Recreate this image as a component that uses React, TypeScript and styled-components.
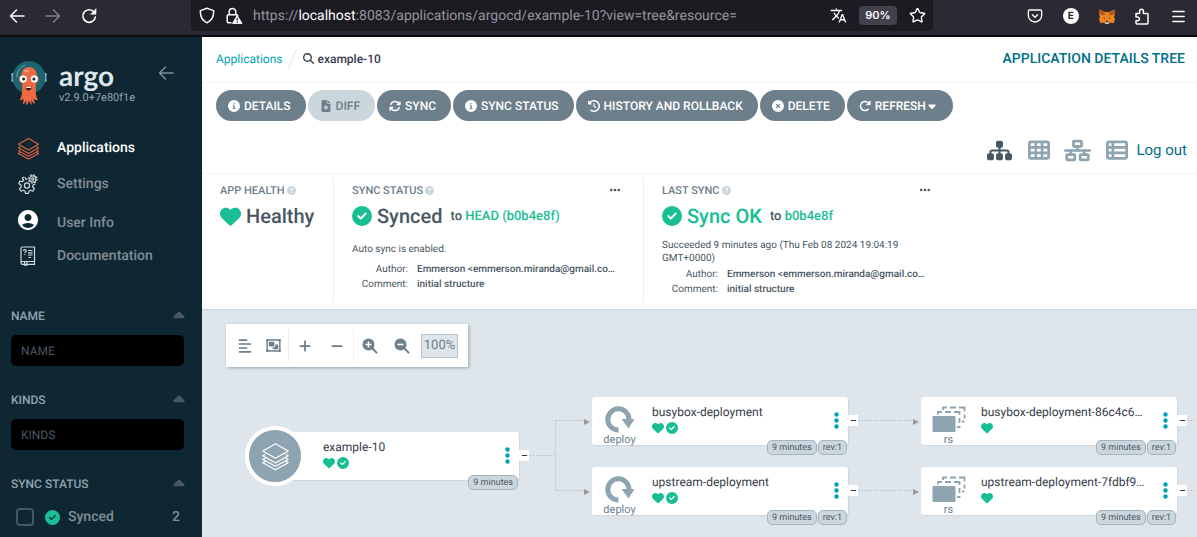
import React from "react";
import styled, { createGlobalStyle } from "styled-components";
import {
  FaArrowRotateRight,
  FaArrowsRotate,
  FaCaretDown,
  FaCaretUp,
  FaCircleCheck,
  FaCircleInfo,
  FaCircleQuestion,
  FaCircleXmark,
  FaClockRotateLeft,
  FaEllipsis,
  FaFileMedical,
  FaHeart,
  FaMagnifyingGlass,
  FaMinus,
  FaNetworkWired,
  FaPlus,
  FaRegObjectGroup,
  FaSitemap,
  FaTableCells,
  FaTableList,
} from "react-icons/fa6";
import { MdAccountCircle, MdTranslate } from "react-icons/md";
import { Menu, Pocket, Star } from "lucide-react";

const GlobalStyle = createGlobalStyle`
  *, *::before, *::after { box-sizing: border-box; }
  body {
    margin: 0;
    font-family: Roboto, "Liberation Sans", sans-serif;
    text-rendering: geometricPrecision;
    color: #495763;
    background: #dee6eb;
    overflow: hidden;
  }
  button, input { font-family: inherit; text-rendering: inherit; }
  button { border: 0; padding: 0; background: none; color: inherit; cursor: pointer; }
  a { text-decoration: none; color: inherit; }
  svg { display: block; flex: none; }
`;

const Page = styled.div`
  min-height: 100vh;
  display: flex;
  flex-direction: column;
`;

/* ---------- browser bar ---------- */

const BrowserBar = styled.header`
  display: flex;
  align-items: flex-start;
  height: 37px;
  background: #2b2a33;
  border-bottom: 2px solid #0c0c0d;
  color: #fbfbfe;
`;

const BrowserNav = styled.div`
  display: flex;
  align-items: center;
  gap: 20px;
  width: 191px;
  height: 32px;
  padding-left: 9px;
`;

const BrowserButton = styled.button<{ $dim?: boolean }>`
  display: flex;
  opacity: ${(p) => (p.$dim ? 0.4 : 1)};
`;

const UrlBar = styled.div`
  flex: 1;
  display: flex;
  align-items: center;
  height: 31px;
  padding: 0 7px 0 8px;
  border-radius: 0 0 4px 4px;
  background: #1c1b22;
`;

const LockButton = styled.button`
  margin-left: 10px;
`;

const UrlText = styled.div`
  flex: 1;
  margin-left: 10px;
  font-size: 14px;
  line-height: 20px;
  color: #94949c;
  white-space: nowrap;

  b { font-weight: 400; color: #fbfbfe; }
`;

const ZoomLevel = styled.button`
  width: 38px;
  height: 19px;
  margin: 0 12px;
  border-radius: 4px;
  background: #42414d;
  color: #fbfbfe;
  font: 600 11px/19px Inter, sans-serif;
`;

const BrowserTools = styled.div`
  display: flex;
  align-items: center;
  justify-content: space-between;
  width: 264px;
  height: 32px;
  padding: 0 10px 0 94px;
`;

const Avatar = styled.button`
  width: 16px;
  height: 16px;
  border-radius: 50%;
  background: #fbfbfe;
  color: #2b2a33;
  font: 700 10px/16px Inter, sans-serif;
`;

/* ---------- sidebar ---------- */

const Shell = styled.div`
  flex: 1;
  display: flex;
`;

const Sidebar = styled.aside`
  flex: none;
  width: 202px;
  padding: 23px 18px 0 11px;
  background: #0f2733;
  color: #818d94;
`;

const Brand = styled.div`
  display: flex;
  height: 69px;
`;

const BrandText = styled.div`
  flex: 1;
  margin-left: 12px;
`;

const Wordmark = styled.div`
  font: 700 28px/30px Lato, sans-serif;
  color: #dee6eb;
`;

const Version = styled.div`
  font-size: 11px;
  line-height: 16px;
  color: #8fa4b1;
`;

const CollapseButton = styled.button`
  align-self: flex-start;
  margin: 5px 10px 0 0;
  color: #818d94;
`;

const NavItem = styled.a<{ $active?: boolean; $low?: boolean }>`
  display: flex;
  align-items: ${(p) => (p.$low ? "flex-end" : "center")};
  gap: 17px;
  height: 36px;
  padding: 7px 0 5px 5px;
  font-size: 14px;
  line-height: 18px;
  font-weight: 500;
  color: ${(p) => (p.$active ? "#ffffff" : "#818d94")};
`;

const NavIcon = styled.span<{ $accent?: boolean }>`
  display: flex;
  justify-content: center;
  align-items: center;
  width: 24px;
  height: 24px;
  color: ${(p) => (p.$accent ? "#e0643c" : "#ffffff")};
`;

const Filters = styled.div`
  display: grid;
  gap: 26px;
  margin-top: 35px;
`;

const FilterTitle = styled.div`
  display: flex;
  justify-content: space-between;
  align-items: center;
  height: 16px;
  margin: 0 -4px 11px 0;
  font-size: 12px;
  font-weight: 500;
  color: #8fa4b1;

  svg { color: #495763; }
`;

const FilterInput = styled.input`
  display: block;
  width: 100%;
  height: 31px;
  padding: 0 10px;
  border: 0;
  border-radius: 5px;
  background: #000;
  color: #fff;
  font-size: 12px;

  &::placeholder { color: #495763; opacity: 1; }
`;

const CheckRow = styled.label`
  display: flex;
  align-items: center;
  gap: 8px;
  padding: 5px 4px 8px 5px;
  font-size: 14px;
  line-height: 18px;
  font-weight: 500;

  svg { color: #18be94; margin-left: 3px; }
  span:last-child { margin-left: auto; }
`;

const Checkbox = styled.input`
  appearance: none;
  width: 18px;
  height: 18px;
  margin: 0;
  border: 2px solid #495763;
  border-radius: 4px;
`;

/* ---------- main column ---------- */

const Main = styled.main`
  flex: 1;
  min-width: 0;
  display: flex;
  flex-direction: column;
`;

const TopBar = styled.div`
  display: flex;
  align-items: center;
  justify-content: space-between;
  height: 46px;
  padding: 0 12px 2px 14px;
  background: #fff;
  border-bottom: 1px solid #f4f7f9;
`;

const Crumbs = styled.nav`
  display: flex;
  align-items: center;
  font-size: 12px;
  line-height: 16px;
  color: #363c4a;

  a { color: #00a2b3; }
  svg:first-of-type { margin-right: -2px; }
  b { font-weight: 500; margin-left: 3px; }
`;

const PageTitle = styled.h1`
  margin: 0;
  font-size: 14px;
  line-height: 18px;
  font-weight: 500;
  color: #006f8a;
`;

const Actions = styled.div`
  padding: 7px 10px 0 14px;
  background: #fff;
  border-bottom: 1px solid #f4f7f9;
`;

const ActionRow = styled.div`
  display: flex;
  gap: 2px;
`;

const ActionButton = styled.button`
  display: flex;
  align-items: center;
  height: 31px;
  padding: 0 15px 0 12px;
  border-radius: 16px;
  background: #6d7f8b;
  color: #fff;
  font-size: 12px;
  font-weight: 500;
  white-space: nowrap;

  &:disabled { background: #ccd6dd; color: #6d7f8b; }
  svg:first-child { margin-right: 4px; }
`;

const ViewRow = styled.div`
  display: flex;
  align-items: center;
  justify-content: flex-end;
  height: 46px;
  margin-top: 6px;
`;

const ViewButton = styled.button<{ $active?: boolean }>`
  display: flex;
  justify-content: center;
  width: 39px;
  color: ${(p) => (p.$active ? "#495763" : "#8fa4b1")};
`;

const LogOut = styled.a`
  font-size: 15px;
  line-height: 20px;
  color: #006f8a;
`;

/* ---------- status panel ---------- */

const StatusPanel = styled.section`
  display: flex;
  height: 136px;
  padding: 3px 0 6px;
  background: #fff;
  border-bottom: 1px solid #ccd6dd;
`;

const StatusItem = styled.div<{ $narrow?: boolean; $last?: boolean }>`
  flex: 0 0 ${(p) => (p.$narrow ? 132 : 310)}px;
  padding: ${(p) => (p.$narrow ? "6px 16px 0 18px" : "6px 22px 0 18px")};
  border-right: 1px solid ${(p) => (p.$last ? "transparent" : "#eaf0f3")};
`;

const StatusLabel = styled.div`
  display: flex;
  align-items: center;
  gap: 2px;
  height: 14px;
  font-size: 11px;
  font-weight: 500;
  color: #6d7f8b;
  white-space: nowrap;

  svg { color: #ccd6dd; }
  button { margin-left: auto; }
  button svg { color: #495763; }
`;

const StatusValue = styled.div<{ $color?: string }>`
  display: flex;
  align-items: center;
  gap: 5px;
  height: 24px;
  margin: 7px 0 11px;
  font-size: 20px;
  font-weight: 500;
  white-space: nowrap;
  color: ${(p) => p.$color || "#495763"};

  svg { color: #18be94; }
`;

const Revision = styled.span`
  margin-left: 3px;
  font-size: 13px;
  color: #495763;

  a { color: #18be94; }
`;

const StatusNote = styled.div<{ $single?: boolean }>`
  padding: ${(p) => (p.$single ? "4px" : "0")} 0;
  font-size: 10px;
  line-height: 13px;
`;

const Facts = styled.dl`
  display: grid;
  grid-template-columns: 56px 1fr;
  column-gap: 9px;
  margin: 2px 0 0;
  font-size: 10px;
  line-height: 15px;

  dt { text-align: right; }
  dd {
    margin: 0;
    font-weight: 500;
    white-space: nowrap;
  }
`;

/* ---------- resource tree ---------- */

const Canvas = styled.section`
  flex: 1;
  position: relative;
  overflow: hidden;
  min-height: 220px;
  padding: 14px 24px;
  background: #dee6eb;
`;

const GraphTools = styled.div`
  display: inline-flex;
  align-items: center;
  height: 43px;
  padding: 0 10px 0 4px;
  background: #fff;
  box-shadow: 1px 1px 3px #8fa4b1;
  color: #6d7f8b;
`;

const ToolGroup = styled.div`
  display: flex;
  align-items: center;
  height: 33px;

  & + & { border-left: 1px solid #eaf0f3; }
`;

const ToolButton = styled.button<{ $narrow?: boolean }>`
  display: flex;
  justify-content: center;
  width: ${(p) => (p.$narrow ? 29 : 32)}px;
`;

const ZoomValue = styled.output`
  margin-left: 3px;
  width: 37px;
  height: 24px;
  border: 1px solid #b3c2cc;
  background: #dee6eb;
  font-size: 13px;
  line-height: 22px;
  text-align: center;
`;

const Edges = styled.svg`
  position: absolute;
  left: 0;
  top: 0;
`;

const NodeCard = styled.article<{ $x: number; $y: number }>`
  position: absolute;
  left: ${(p) => p.$x}px;
  top: ${(p) => p.$y}px;
  display: flex;
  width: 256px;
  height: 48px;
  border-radius: 3px;
  background: #fff;
  box-shadow: 1px 1px 1px #ccd6dd;
`;

const KindColumn = styled.div`
  display: flex;
  flex-direction: column;
  align-items: center;
  width: 60px;
  padding: 9px 5px 0 0;
  color: #8fa4b1;
`;

const KindLabel = styled.span`
  font-size: 11px;
  line-height: 14px;
  color: #6d7f8b;
`;

const AppBadge = styled.div`
  flex: none;
  display: flex;
  align-items: center;
  justify-content: center;
  width: 60px;
  height: 60px;
  margin: -6px 0 0 -18px;
  border: 4px solid #fff;
  border-radius: 50%;
  background: #8fa4b1;
  color: #fff;
`;

const NodeBody = styled.div<{ $root?: boolean }>`
  flex: 1;
  min-width: 0;
  padding: 8px 0 0 ${(p) => (p.$root ? 18 : 0)}px;
`;

const NodeName = styled.div`
  white-space: nowrap;
  font-size: 12px;
  line-height: 15px;
  color: #363c4a;
`;

const NodeStatus = styled.div`
  display: flex;
  gap: 2px;
  margin-top: 2px;
  color: #18be94;
`;

const Kebab = styled.button`
  position: absolute;
  right: 9px;
  top: 15px;
  color: #00a2b3;
`;

const Collapse = styled.button`
  position: absolute;
  right: -10px;
  top: 18px;
  display: flex;
  align-items: center;
  justify-content: center;
  width: 10px;
  height: 11px;
  background: #fff;
  color: #363c4a;
`;

const Tags = styled.div`
  position: absolute;
  right: 1px;
  bottom: -10px;
  display: flex;
  gap: 1px;
`;

const Tag = styled.span`
  height: 15px;
  padding: 0 4px;
  border: 1px solid #a3b4c0;
  border-radius: 5px;
  background: #ccd6dd;
  font-size: 9px;
  line-height: 14px;
  color: #495763;
`;

/* ---------- drawings ---------- */

const ArrowGlyph = ({ flip }: { flip?: boolean }) => (
  <svg width="16" height="16" viewBox="0 0 16 16" fill="none" stroke="currentColor" strokeWidth="1.5"
    strokeLinecap="round" strokeLinejoin="round">
    <path d={flip ? "M14.500 8H1M8.500 2l6 6-6 6" : "M1.500 8H15M7.500 2l-6 6 6 6"} />
  </svg>
);

const ReloadGlyph = () => (
  <svg width="16" height="16" viewBox="0 0 16 16" fill="none" stroke="currentColor" strokeWidth="1.6" strokeLinecap="round">
    <path d="M13.2 4.2A6.3 6.3 0 1 0 14.4 9" />
    <path d="M15 1v5.2H9.8z" fill="currentColor" strokeWidth="0.6" strokeLinejoin="round" />
  </svg>
);

const ShieldGlyph = () => (
  <svg width="16" height="17" viewBox="0 0 16 17" fill="none" stroke="currentColor" strokeWidth="1.5" strokeLinejoin="round">
    <path d="M8 1.200 14.600 3.600c.4 5.400-1.600 9.600-6.600 12.200C3 13.200 1 9 1.400 3.600z" />
  </svg>
);

const LockGlyph = () => (
  <svg width="18" height="18" viewBox="0 0 18 18" fill="none">
    <path d="M4.200 8V4.800a3.300 3.300 0 0 1 6.600 0V8" stroke="currentColor" strokeWidth="1.500" />
    <path d="M6.500 15.800H3.700a1.500 1.500 0 0 1-1.500-1.500V9.200a1.500 1.500 0 0 1 1.500-1.500h7.600a1.500 1.500 0 0 1 1.500 1.500" stroke="currentColor" strokeWidth="1.500" />
    <path d="M12.200 8.600 17 16.400H7.500z" fill="currentColor" stroke="currentColor" strokeWidth="1" strokeLinejoin="round" />
    <path d="M12.200 11v2.600M12.200 14.600v1.200" stroke="#1c1b22" strokeWidth="1.200" />
  </svg>
);

const PuzzleGlyph = () => (
  <svg width="16" height="17" viewBox="0 0 16 17" fill="none" stroke="currentColor" strokeWidth="1.500" strokeLinejoin="round">
    <path d="M2 5.500h3.600V3.200a1.900 1.900 0 0 1 3.800 0v2.300H13a1 1 0 0 1 1 1V15a1 1 0 0 1-1 1H3a1 1 0 0 1-1-1v-2.300h1.500a1.900 1.900 0 0 0 0-3.800H2z" />
  </svg>
);

const FoxGlyph = () => (
  <svg width="16" height="15" viewBox="0 0 16 15">
    <path d="M.6.4 6.200 3h3.600L15.400.4 16 5l-1 3.200.8 2.600-1.200 3.400-3.400-.8L9.600 15H6.400l-1.600-1.600-3.400.8L.2 10.800 1 8.200 0 5z" fill="#e8821e" />
    <path d="M.6.4 6.200 3 5 6.500 0 5zM15.400.4 9.800 3 11 6.500 16 5z" fill="#b0581d" />
    <path d="M1 8.200 5 6.500l.8 3.500-1 3.400L.2 10.800zM15 8.200l-4-1.700-.8 3.500 1 3.400 4.600-2.600z" fill="#f6851b" />
    <path d="M4 8.300l2 .8-.6.900zM12 8.300l-2 .8.600.9z" fill="#233447" />
    <path d="M6.200 12.500h3.600l.2 1.600-.8.900H6.800l-.8-.9z" fill="#d7c1b3" />
    <path d="M6.900 12h2.200l.3 1.200H6.600z" fill="#233447" />
  </svg>
);

const ArgoLogo = () => (
  <svg width="36" height="46" viewBox="0 0 36 46">
    <rect x="0.500" y="13" width="3" height="9" rx="1.200" fill="#a9c4dc" />
    <rect x="32.500" y="13" width="3" height="9" rx="1.200" fill="#a9c4dc" />
    <circle cx="18" cy="17.500" r="16.500" fill="#1c6470" />
    <path d="M5.800 17c0-6 3.500-10 8-11.500" stroke="#6fb0b8" strokeWidth="1" fill="none" strokeLinecap="round" />
    <path d="M18 7c-5 0-7.600 3.800-7.600 8.600 0 3.400.8 5.400.8 9.400 0 5 .4 11-2.600 15 1.600.4 3-.2 3.800-1.400.2 2.400-.2 4.400-.8 5.600 2-.2 3-2 3.400-4.200.4 2.200.4 3.600 0 5 2.200-.4 2.600-2.600 2.800-5 .8 2 1.400 3.600 2.400 4.800.8-1.600.2-3.400-.2-5.200 1.200 1.800 2 3.800 3.800 4.200 0-1.800-1-3.400-1.200-5.200 1 1.200 2.400 1.800 4.400 1.400-2.800-4-2.200-10-2.200-15 0-4 1-6 1-9.400C25.800 10.800 23 7 18 7z" fill="#ef6a42" />
    <ellipse cx="15.500" cy="11" rx="2.400" ry="1.600" fill="#f79a78" />
    <circle cx="12.300" cy="19" r="4" fill="#fff" stroke="#d8502c" strokeWidth="0.600" />
    <circle cx="23.300" cy="19" r="4" fill="#fff" stroke="#d8502c" strokeWidth="0.600" />
    <circle cx="12.600" cy="19" r="1.500" fill="#0f2733" />
    <circle cx="22.900" cy="19" r="1.500" fill="#0f2733" />
    <path d="M14.600 26.500q3.200 1 6 0c0 2.600-1.200 4-3 4s-3-1.400-3-4z" fill="#3a1a17" />
    <path d="M15.200 26.700q2.700.8 4.800 0v1.200h-4.800z" fill="#fff" />
  </svg>
);

const LayersGlyph = ({ size, stroke = 1 }: { size: number; stroke?: number }) => (
  <svg width={size} height={size} viewBox="0 0 24 24" fill="none" stroke="currentColor" strokeWidth={stroke} strokeLinejoin="round" strokeLinecap="round">
    <path d="M12 1.500 22.500 7.500 12 13.500 1.500 7.500z" />
    <path d="M3.200 10.300 1.500 11.300 12 17.300l10.500-6-1.700-1" />
    <path d="M3.200 13.500 1.500 14.500 12 20l10.500-5.500-1.700-1" />
    <path d="M3.200 16.200 1.500 17.200 12 23l10.500-5.800-1.700-1" />
  </svg>
);

const GearsGlyph = () => (
  <svg width="20" height="20" viewBox="0 0 20 20" fill="none" stroke="#d3dade" strokeWidth="1.200" strokeLinejoin="round">
    <path d="M7.300 3.500 8 5.300a6 6 0 0 1 1.500-.1M4 4.200l1.700 2a6 6 0 0 0-1.300 1.600L2 7 .8 9.600l2.200 1.300c0 .7 0 1.300.3 2L1.400 14.600 3 17.200l2.300-.9c.5.400 1 .7 1.700.9L7.400 19.400h3l.5-2.200c.6-.2 1.200-.5 1.700-.9l2.300.9 1.500-2.500-1.800-1.700c.2-.6.3-1.200.3-1.800l2.300-1.300M4 4.200 6.500 3" />
    <circle cx="9" cy="11.500" r="2.600" />
    <circle cx="14.800" cy="5" r="3.100" />
    <circle cx="14.800" cy="5" r="1.100" />
    <circle cx="14.800" cy="5" r="4.200" strokeDasharray="1.700 1.600" />
  </svg>
);

const BookGlyph = () => (
  <svg width="16" height="20" viewBox="0 0 16 20" fill="none" stroke="#d3dade" strokeWidth="1.200">
    <path d="M2.500 1h12v14.500h-12A1.600 1.600 0 0 0 1 17V2.500A1.500 1.500 0 0 1 2.500 1zM1 17a1.500 1.500 0 0 0 1.500 1.400H14.500v-2.900M4.500 16v3.400l1.200-.8 1.200.8V16" />
    <path d="M8 4.500h4.500M8 6.800h4.500M8 9h4.500M8.500 11.500h2.500" />
    <path d="M3.500 4.900c0-1.600 2.700-1.600 2.700 0 0 1-1.300 1-1.300 2M4.900 8v1.100" />
  </svg>
);

const AlignGlyph = () => (
  <svg width="14" height="14" viewBox="0 0 14 14" stroke="currentColor" strokeWidth="1.700" strokeLinecap="round">
    <path d="M1.500 1.200h7M1.500 5h11M1.500 9h7M1.500 12.800h11" />
  </svg>
);

const ZoomGlyph = ({ plus }: { plus?: boolean }) => (
  <svg width="16" height="16" viewBox="0 0 16 16">
    <circle cx="6.500" cy="6.500" r="6" fill="currentColor" />
    <path d="M10.500 10.500 14.600 14.600" stroke="currentColor" strokeWidth="2" strokeLinecap="round" />
    <path d={plus ? "M3.500 6.500h6M6.500 3.500v6" : "M3.500 6.500h6"} stroke="#fff" strokeWidth="1.600" />
  </svg>
);

const DeployGlyph = () => (
  <svg width="30" height="27" viewBox="0 0 30 27">
    <path d="M13.500 24A10.600 10.600 0 1 1 24 13.500" fill="none" stroke="currentColor" strokeWidth="5" />
    <path d="M16.500 13h13L23.500 22.500z" fill="currentColor" />
  </svg>
);

const ReplicaGlyph = () => (
  <svg width="34" height="27" viewBox="0 0 34 27" fill="none" stroke="currentColor" strokeWidth="1.800">
    <rect x="0.500" y="10" width="23" height="16" rx="1" fill="currentColor" stroke="none" />
    <path d="M6 8.500V6h4M13 6h6M22 6h5.500v3M27.500 12v5M27.500 20v1H25" />
    <path d="M11 4V1.500h4M18 1.500h6M27 1.500h5.500v4M32.500 8.500v4M32.500 15.500H30" />
  </svg>
);

const KebabGlyph = () => (
  <svg width="5" height="17" viewBox="0 0 5 17" fill="currentColor">
    <circle cx="2.500" cy="2.500" r="2.200" />
    <circle cx="2.500" cy="8.500" r="2.200" />
    <circle cx="2.500" cy="14.500" r="2.200" />
  </svg>
);

/* ---------- data ---------- */

type TreeNode = { name: string; kind: "app" | "deploy" | "rs"; x: number; y: number; synced: boolean; tags: string[] };

const NODES: TreeNode[] = [
  { name: "example-10", kind: "app", x: 61, y: 122, synced: true, tags: ["9 minutes"] },
  { name: "busybox-deployment", kind: "deploy", x: 390, y: 87, synced: true, tags: ["9 minutes", "rev:1"] },
  { name: "upstream-deployment", kind: "deploy", x: 390, y: 157, synced: true, tags: ["9 minutes", "rev:1"] },
  { name: "busybox-deployment-86c4c6…", kind: "rs", x: 719, y: 87, synced: false, tags: ["9 minutes", "rev:1"] },
  { name: "upstream-deployment-7fdbf9…", kind: "rs", x: 719, y: 157, synced: false, tags: ["9 minutes", "rev:1"] },
];

const AUTHOR = "Emmerson <emmerson.miranda@gmail.co…";

const Node = ({ node }: { node: TreeNode }) => (
  <NodeCard $x={node.x} $y={node.y}>
    {node.kind === "app" ? (
      <AppBadge><LayersGlyph size={29} /></AppBadge>
    ) : (
      <KindColumn>
        {node.kind === "deploy" ? <DeployGlyph /> : <ReplicaGlyph />}
        <KindLabel>{node.kind}</KindLabel>
      </KindColumn>
    )}
    <NodeBody $root={node.kind === "app"}>
      <NodeName>{node.name}</NodeName>
      <NodeStatus>
        <FaHeart size={12} />
        {node.synced && <FaCircleCheck size={12} />}
      </NodeStatus>
    </NodeBody>
    <Kebab aria-label="Actions"><KebabGlyph /></Kebab>
    <Collapse aria-label="Collapse"><FaMinus size={7} /></Collapse>
    <Tags>{node.tags.map((t) => <Tag key={t}>{t}</Tag>)}</Tags>
  </NodeCard>
);

const CommitFacts = () => (
  <Facts>
    <dt>Author:</dt>
    <dd>{AUTHOR}</dd>
    <dt>Comment:</dt>
    <dd>initial structure</dd>
  </Facts>
);

export default function App() {
  return (
    <Page>
      <GlobalStyle />
      <BrowserBar>
        <BrowserNav>
          <BrowserButton aria-label="Back"><ArrowGlyph /></BrowserButton>
          <BrowserButton aria-label="Forward" $dim><ArrowGlyph flip /></BrowserButton>
          <BrowserButton aria-label="Reload"><ReloadGlyph /></BrowserButton>
        </BrowserNav>
        <UrlBar>
          <ShieldGlyph />
          <LockButton aria-label="Connection"><LockGlyph /></LockButton>
          <UrlText role="textbox" aria-label="Address">
            https://<b>localhost</b>:8083/applications/argocd/example-10?view=tree&amp;resource=
          </UrlText>
          <MdTranslate size={17} />
          <ZoomLevel>90%</ZoomLevel>
          <Star size={17} />
        </UrlBar>
        <BrowserTools>
          <Pocket size={16} />
          <Avatar>E</Avatar>
          <FoxGlyph />
          <PuzzleGlyph />
          <Menu size={17} />
        </BrowserTools>
      </BrowserBar>

      <Shell>
        <Sidebar>
          <Brand>
            <ArgoLogo />
            <BrandText>
              <Wordmark>argo</Wordmark>
              <Version>v2.9.0+7e80f1e</Version>
            </BrandText>
            <CollapseButton aria-label="Collapse sidebar"><ArrowGlyph /></CollapseButton>
          </Brand>
          <nav>
            <NavItem href="#applications" $active>
              <NavIcon $accent><LayersGlyph size={23} stroke={1.1} /></NavIcon>
              Applications
            </NavItem>
            <NavItem href="#settings"><NavIcon><GearsGlyph /></NavIcon>Settings</NavItem>
            <NavItem href="#user" $low><NavIcon><MdAccountCircle size={24} /></NavIcon>User Info</NavItem>
            <NavItem href="#docs"><NavIcon><BookGlyph /></NavIcon>Documentation</NavItem>
          </nav>
          <Filters>
            <div>
              <FilterTitle><label htmlFor="name">NAME</label><FaCaretUp size={18} /></FilterTitle>
              <FilterInput id="name" placeholder="NAME" />
            </div>
            <div>
              <FilterTitle><label htmlFor="kinds">KINDS</label><FaCaretUp size={18} /></FilterTitle>
              <FilterInput id="kinds" placeholder="KINDS" />
            </div>
            <div>
              <FilterTitle>SYNC STATUS<FaCaretUp size={18} /></FilterTitle>
              <CheckRow>
                <Checkbox type="checkbox" />
                <FaCircleCheck size={15} />
                <span>Synced</span>
                <span>2</span>
              </CheckRow>
            </div>
          </Filters>
        </Sidebar>

        <Main>
          <TopBar>
            <Crumbs>
              <a href="#applications">Applications</a>
              <svg width="23" height="20" viewBox="0 0 23 20"><path d="M6 20 14.500 0" stroke="#dee6eb" /></svg>
              <FaMagnifyingGlass size={11} />
              <b>example-10</b>
            </Crumbs>
            <PageTitle>APPLICATION DETAILS TREE</PageTitle>
          </TopBar>

          <Actions>
            <ActionRow>
              <ActionButton><FaCircleInfo size={12} />DETAILS</ActionButton>
              <ActionButton disabled><FaFileMedical size={12} />DIFF</ActionButton>
              <ActionButton><FaArrowsRotate size={12} />SYNC</ActionButton>
              <ActionButton><FaCircleInfo size={12} />SYNC STATUS</ActionButton>
              <ActionButton><FaClockRotateLeft size={12} />HISTORY AND ROLLBACK</ActionButton>
              <ActionButton><FaCircleXmark size={12} />DELETE</ActionButton>
              <ActionButton><FaArrowRotateRight size={12} />REFRESH<FaCaretDown size={12} /></ActionButton>
            </ActionRow>
            <ViewRow>
              <ViewButton aria-label="Tree" $active><FaSitemap size={25} /></ViewButton>
              <ViewButton aria-label="Pods"><FaTableCells size={22} /></ViewButton>
              <ViewButton aria-label="Network"><FaNetworkWired size={27} /></ViewButton>
              <ViewButton aria-label="List"><FaTableList size={22} /></ViewButton>
              <LogOut href="#logout">Log out</LogOut>
            </ViewRow>
          </Actions>

          <StatusPanel>
            <StatusItem $narrow>
              <StatusLabel>APP HEALTH<FaCircleQuestion size={9} /></StatusLabel>
              <StatusValue><FaHeart size={21} />Healthy</StatusValue>
            </StatusItem>
            <StatusItem>
              <StatusLabel>
                SYNC STATUS<FaCircleQuestion size={9} />
                <button aria-label="More"><FaEllipsis size={12} /></button>
              </StatusLabel>
              <StatusValue>
                <FaCircleCheck size={20} />Synced
                <Revision>to <a href="#head">HEAD (b0b4e8f)</a></Revision>
              </StatusValue>
              <StatusNote $single>Auto sync is enabled.</StatusNote>
              <CommitFacts />
            </StatusItem>
            <StatusItem $last>
              <StatusLabel>
                LAST SYNC<FaCircleQuestion size={9} />
                <button aria-label="More"><FaEllipsis size={12} /></button>
              </StatusLabel>
              <StatusValue $color="#18be94">
                <FaCircleCheck size={20} />Sync OK
                <Revision>to <a href="#rev">b0b4e8f</a></Revision>
              </StatusValue>
              <StatusNote>Succeeded 9 minutes ago (Thu Feb 08 2024 19:04:19<br />GMT+0000)</StatusNote>
              <CommitFacts />
            </StatusItem>
          </StatusPanel>

          <Canvas>
            <GraphTools>
              <ToolGroup>
                <ToolButton $narrow aria-label="Compact"><AlignGlyph /></ToolButton>
                <ToolButton $narrow aria-label="Group nodes"><FaRegObjectGroup size={17} /></ToolButton>
              </ToolGroup>
              <ToolGroup>
                <ToolButton aria-label="Expand all"><FaPlus size={14} /></ToolButton>
                <ToolButton aria-label="Collapse all"><FaMinus size={14} /></ToolButton>
              </ToolGroup>
              <ToolGroup>
                <ToolButton aria-label="Zoom in"><ZoomGlyph plus /></ToolButton>
                <ToolButton aria-label="Zoom out"><ZoomGlyph /></ToolButton>
                <ZoomValue>100%</ZoomValue>
              </ToolGroup>
            </GraphTools>
            <Edges width="1000" height="227">
              <g stroke="#a3b4c0" strokeDasharray="1 2" fill="none">
                <path d="M328 145.500H353.500M353.500 110.500V181.500M353.500 110.500H382M353.500 180.500H382" />
                <path d="M657 110.500H711M657 180.500H711M986 110.500H1000M986 180.500H1000" />
              </g>
              <path d="M382 109v6l6-3zM382 179v6l6-3zM711 109v6l6-3zM711 179v6l6-3z" fill="#999" />
            </Edges>
            {NODES.map((n) => <Node key={n.name} node={n} />)}
          </Canvas>
        </Main>
      </Shell>
    </Page>
  );
}
